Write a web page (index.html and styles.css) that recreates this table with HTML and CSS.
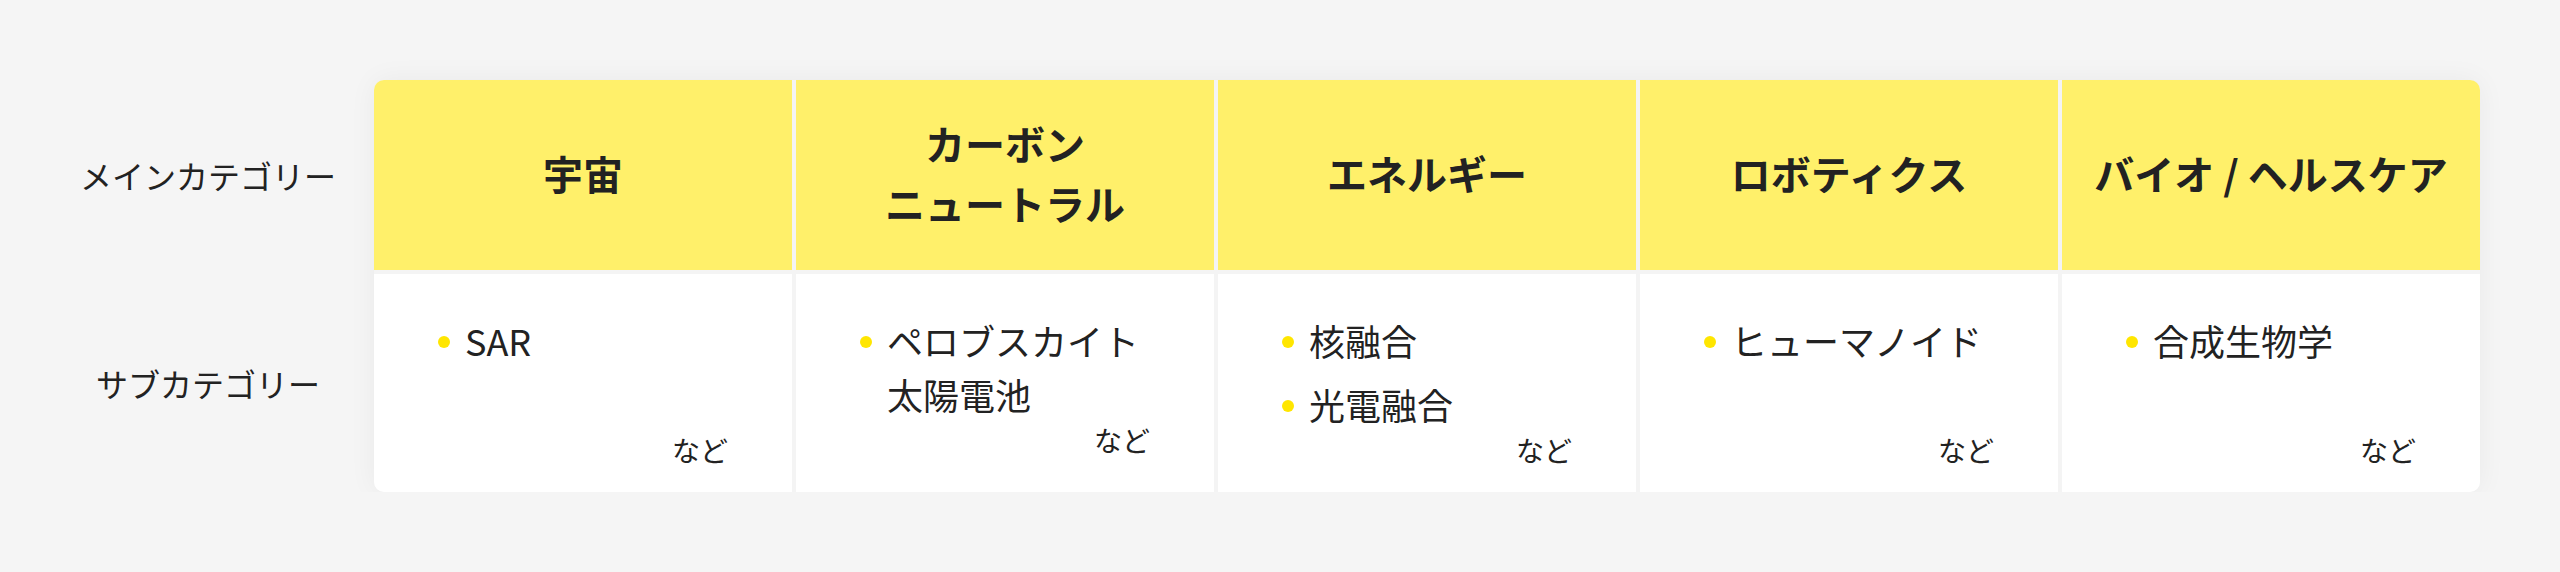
FILE: index.html
```html
<!DOCTYPE html>
<html lang="ja">
<head>
<meta charset="utf-8">
<title>カテゴリー</title>
<link rel="stylesheet" href="styles.css">
</head>
<body>
<main class="page">
  <div class="labels">
    <div class="label">メインカテゴリー</div>
    <div class="label">サブカテゴリー</div>
  </div>
  <div class="table">
    <div class="head">宇宙</div>
    <div class="head">カーボン<br>ニュートラル</div>
    <div class="head">エネルギー</div>
    <div class="head">ロボティクス</div>
    <div class="head">バイオ / ヘルスケア</div>

    <div class="cell">
      <ul class="list">
        <li class="item">SAR</li>
        <li class="item item--empty" aria-hidden="true">&nbsp;</li>
      </ul>
      <p class="etc">など</p>
    </div>
    <div class="cell">
      <ul class="list">
        <li class="item">ペロブスカイト太陽電池</li>
      </ul>
      <p class="etc">など</p>
    </div>
    <div class="cell">
      <ul class="list">
        <li class="item">核融合</li>
        <li class="item">光電融合</li>
      </ul>
      <p class="etc">など</p>
    </div>
    <div class="cell">
      <ul class="list">
        <li class="item">ヒューマノイド</li>
        <li class="item item--empty" aria-hidden="true">&nbsp;</li>
      </ul>
      <p class="etc">など</p>
    </div>
    <div class="cell">
      <ul class="list">
        <li class="item">合成生物学</li>
        <li class="item item--empty" aria-hidden="true">&nbsp;</li>
      </ul>
      <p class="etc">など</p>
    </div>
  </div>
</main>
</body>
</html>
```
FILE: styles.css
```css
* { box-sizing: border-box; }

html, body {
  margin: 0;
  padding: 0;
  background: #f5f5f5;
}

body {
  font-family: "Noto Sans CJK JP", "Noto Sans", sans-serif;
  color: #222222;
}

.page {
  display: flex;
  gap: 44px;
  padding: 80px 80px 0 80px;
}

.labels {
  width: 250px;
  display: grid;
  grid-template-rows: 190px 218px;
  row-gap: 4px;
}

.label {
  display: flex;
  align-items: center;
  justify-content: center;
  font-size: 32px;
  line-height: 1.5;
  white-space: nowrap;
}

.table {
  display: grid;
  grid-template-columns: repeat(5, 418px);
  grid-template-rows: 190px 218px;
  gap: 4px;
  background: #f4f4f4;
  border-radius: 10px;
  overflow: hidden;
  box-shadow: 0 0 28px rgba(0, 0, 0, 0.05);
}

.head {
  background: #fff06a;
  display: flex;
  align-items: center;
  justify-content: center;
  text-align: center;
  padding-bottom: 4px;
  font-size: 40px;
  font-weight: 700;
  line-height: 1.5;
}

.cell {
  background: #ffffff;
  padding: 39px 64px 26px 64px;
}

.list {
  list-style: none;
  margin: 0;
  padding: 0;
  display: flex;
  flex-direction: column;
  gap: 10px;
}

.item {
  position: relative;
  padding-left: 27px;
  font-size: 36px;
  line-height: 1.5;
}

.item::before {
  content: "";
  position: absolute;
  left: 0;
  top: 23px;
  width: 12px;
  height: 12px;
  border-radius: 50%;
  background: #ffe600;
}

.item--empty { visibility: hidden; }

.etc {
  margin: 5px 0 0 0;
  text-align: right;
  font-size: 28px;
  line-height: 1;
}
```
